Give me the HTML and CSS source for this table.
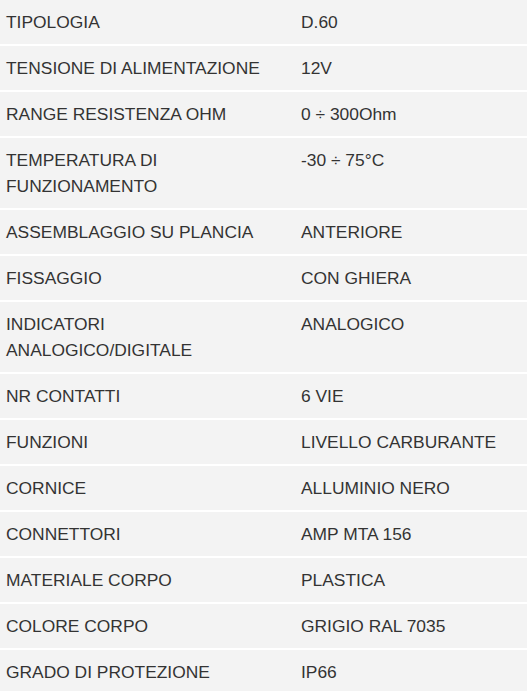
FILE: index.html
```html
<!DOCTYPE html>
<html lang="it">
<head>
<meta charset="utf-8">
<link rel="stylesheet" href="styles.css">
</head>
<body>
<table class="specs">
<tbody>
<tr><td class="k">TIPOLOGIA</td><td class="v">D.60</td></tr>
<tr><td class="k">TENSIONE DI ALIMENTAZIONE</td><td class="v">12V</td></tr>
<tr><td class="k">RANGE RESISTENZA OHM</td><td class="v">0 ÷ 300Ohm</td></tr>
<tr><td class="k">TEMPERATURA DI FUNZIONAMENTO</td><td class="v">-30 ÷ 75°C</td></tr>
<tr><td class="k">ASSEMBLAGGIO SU PLANCIA</td><td class="v">ANTERIORE</td></tr>
<tr><td class="k">FISSAGGIO</td><td class="v">CON GHIERA</td></tr>
<tr><td class="k">INDICATORI ANALOGICO/DIGITALE</td><td class="v">ANALOGICO</td></tr>
<tr><td class="k">NR CONTATTI</td><td class="v">6 VIE</td></tr>
<tr><td class="k">FUNZIONI</td><td class="v">LIVELLO CARBURANTE</td></tr>
<tr><td class="k">CORNICE</td><td class="v">ALLUMINIO NERO</td></tr>
<tr><td class="k">CONNETTORI</td><td class="v">AMP MTA 156</td></tr>
<tr><td class="k">MATERIALE CORPO</td><td class="v">PLASTICA</td></tr>
<tr><td class="k">COLORE CORPO</td><td class="v">GRIGIO RAL 7035</td></tr>
<tr><td class="k">GRADO DI PROTEZIONE</td><td class="v">IP66</td></tr>
</tbody>
</table>
</body>
</html>
```
FILE: styles.css
```css
html, body {
  margin: 0;
  padding: 0;
  background: #f3f3f3;
}
.specs {
  width: 527px;
  border-collapse: collapse;
  table-layout: fixed;
  font-family: "Liberation Sans", Arial, sans-serif;
  font-size: 17.4px;
  line-height: 26px;
  color: #333333;
  background: #f3f3f3;
}
.specs td {
  padding: 9px 6px;
  border-bottom: 2px solid #ffffff;
  vertical-align: top;
  text-align: left;
}
.specs .k {
  width: 283px;
}
```
